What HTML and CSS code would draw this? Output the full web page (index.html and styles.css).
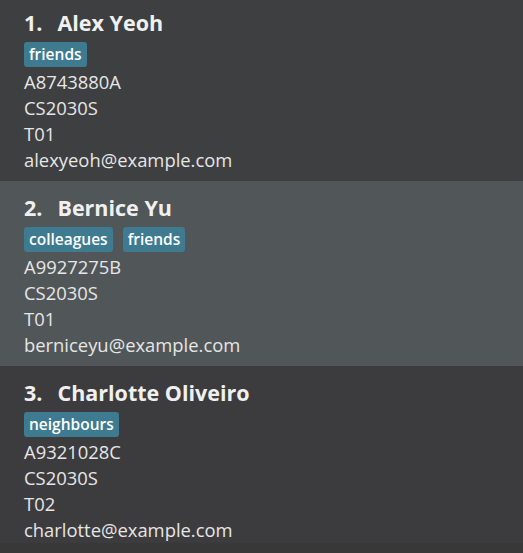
FILE: index.html
```html
<!DOCTYPE html>
<html>
<head>
<meta charset="utf-8">
<link rel="stylesheet" href="styles.css">
</head>
<body>
<div class="list">
  <div class="card">
    <div class="name"><span class="idx">1.</span><span>Alex Yeoh</span></div>
    <div class="tags"><span class="tag">friends</span></div>
    <div class="line">A8743880A</div>
    <div class="line">CS2030S</div>
    <div class="line">T01</div>
    <div class="line">alexyeoh@example.com</div>
  </div>
  <div class="card selected">
    <div class="name"><span class="idx">2.</span><span>Bernice Yu</span></div>
    <div class="tags"><span class="tag">colleagues</span><span class="tag">friends</span></div>
    <div class="line">A9927275B</div>
    <div class="line">CS2030S</div>
    <div class="line">T01</div>
    <div class="line">berniceyu@example.com</div>
  </div>
  <div class="card alt">
    <div class="name"><span class="idx">3.</span><span>Charlotte Oliveiro</span></div>
    <div class="tags"><span class="tag">neighbours</span></div>
    <div class="line">A9321028C</div>
    <div class="line">CS2030S</div>
    <div class="line">T02</div>
    <div class="line">charlotte@example.com</div>
  </div>
</div>
</body>
</html>
```

FILE: styles.css
```css
html, body {
  margin: 0;
  padding: 0;
}
body {
  background: #383838;
  font-family: "Open Sans", "Noto Sans", sans-serif;
  width: 523px;
  height: 553px;
  overflow: hidden;
}
.list {
  height: 543px;
  overflow: hidden;
  display: flex;
  flex-direction: column;
}
.card {
  flex: none;
  background: #3e3f41;
  padding: 12px 24px 8px 24px;
  height: 185px;
  box-sizing: border-box;
}
.card:first-child {
  padding-top: 8px;
  height: 181px;
}
.card.selected {
  background: #515658;
}
.card.alt {
  background: #3c3c3e;
}
.name {
  display: flex;
  gap: 15px;
  font-size: 21.5px;
  font-weight: 700;
  line-height: 30px;
  color: #f0f0f0;
}
.tags {
  display: flex;
  gap: 10px;
  margin-top: 4px;
}
.tag {
  background: #3e7b91;
  color: #ffffff;
  font-size: 15.5px;
  font-weight: 600;
  line-height: 25px;
  padding: 0 5px;
  border-radius: 3px;
}
.line {
  font-size: 18.4px;
  line-height: 26px;
  color: #e6e6e6;
}
.tags + .line {
  margin-top: 2px;
}
```
